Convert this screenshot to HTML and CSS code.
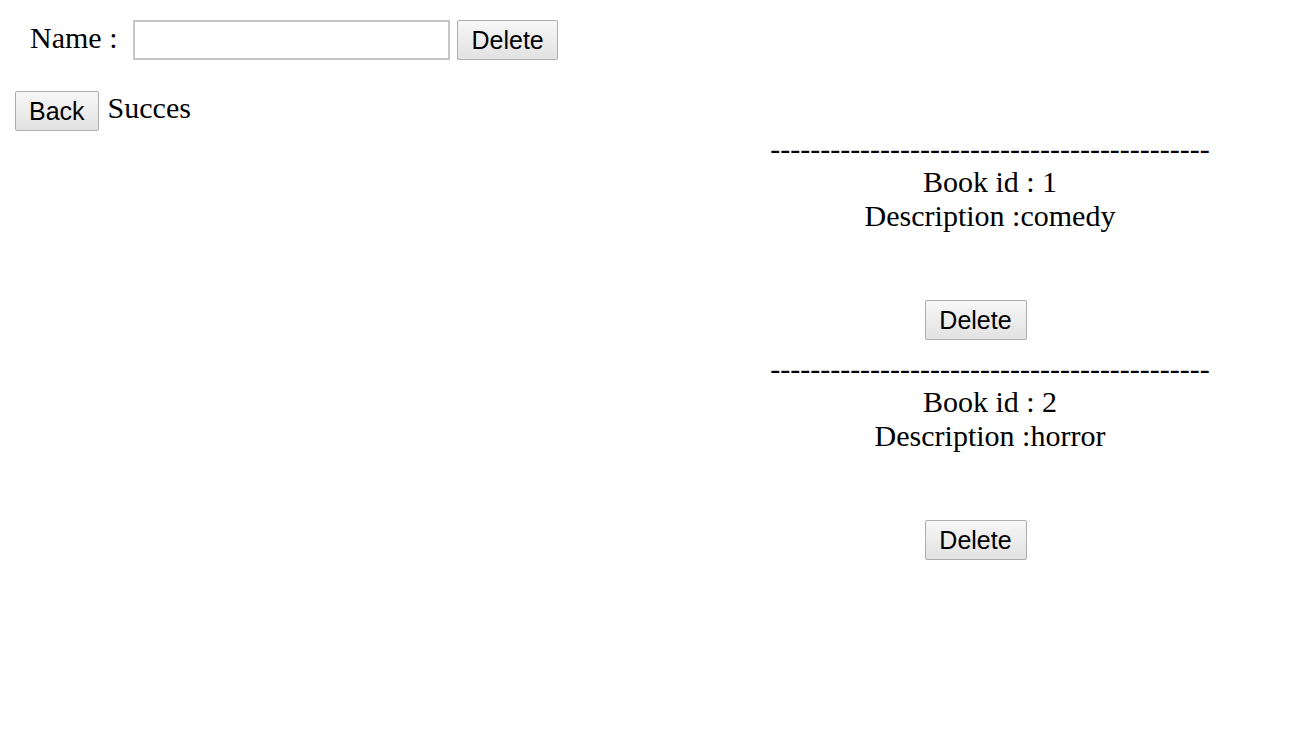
FILE: index.html
```html
<!DOCTYPE html>
<html>
<head>
<meta charset="utf-8">
<title>Books</title>
<link rel="stylesheet" href="styles.css">
</head>
<body>
<form class="name-row">
  <label class="name-label" for="name">Name :</label>
  <input class="name-input" id="name" type="text">
  <button class="btn" type="button">Delete</button>
</form>
<div class="status-row">
  <button class="btn" type="button">Back</button>
  <span class="status">Succes</span>
</div>
<div class="book-area">
  <div class="book-list">
    <div class="book">
      <div class="sep">--------------------------------------------</div>
      <div class="line">Book id : 1</div>
      <div class="line">Description :comedy</div>
      <button class="btn book-btn" type="button">Delete</button>
    </div>
    <div class="book">
      <div class="sep">--------------------------------------------</div>
      <div class="line">Book id : 2</div>
      <div class="line">Description :horror</div>
      <button class="btn book-btn" type="button">Delete</button>
    </div>
  </div>
</div>
</body>
</html>
```
FILE: styles.css
```css
html, body {
  background: #ffffff;
}
body {
  margin: 0;
  padding: 20px 15px 0 15px;
  font-family: "Liberation Serif", "Times New Roman", serif;
  font-size: 30px;
  color: #000000;
}
.btn {
  font-family: "Liberation Sans", Arial, sans-serif;
  font-size: 25px;
  line-height: 28px;
  color: #000;
  padding: 5px 13px;
  border: 1px solid #adadad;
  border-radius: 2px;
  background: linear-gradient(#f7f7f7, #e2e2e2);
  box-sizing: border-box;
  height: 40px;
  margin: 0;
}
.name-row {
  display: flex;
  align-items: center;
  margin: 0;
  padding-left: 15px;
}
.name-label {
  margin-right: 16px;
  line-height: 36px;
  padding-bottom: 4px;
}
.name-input {
  width: 317px;
  height: 40px;
  box-sizing: border-box;
  border: 2px solid #c6c6c6;
  margin: 0 7px 0 0;
  font-size: 25px;
  padding: 2px 4px;
}
.status-row {
  display: flex;
  align-items: center;
  margin-top: 31px;
}
.status {
  margin-left: 9px;
  line-height: 34px;
  padding-bottom: 6px;
}
.book-area {
  display: flex;
  justify-content: flex-end;
}
.book-list {
  width: 620px;
  display: flex;
  flex-direction: column;
  margin-right: -15px;
  padding-top: 1px;
}
.book {
  display: flex;
  flex-direction: column;
  align-items: center;
  text-align: center;
}
.sep {
  line-height: 33px;
}
.line {
  line-height: 34px;
}
.book-btn {
  margin-top: 67px;
  margin-bottom: 12px;
  margin-right: 29px;
  width: 102px;
}
```
